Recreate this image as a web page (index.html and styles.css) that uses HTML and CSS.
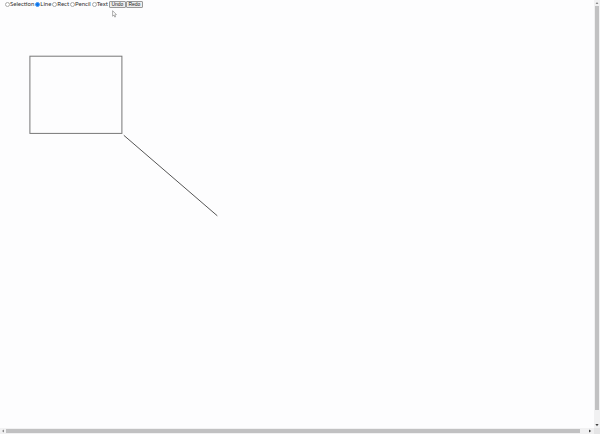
FILE: index.html
```
<!DOCTYPE html>
<html lang="en">
<head>
<meta charset="utf-8">
<title>Drawing board</title>
<link rel="stylesheet" href="styles.css">
</head>
<body>
<div class="window">
  <main class="page">
    <form class="toolbar">
      <label class="tool"><input type="radio" name="tool">Selection</label>
      <label class="tool"><input type="radio" name="tool" checked>Line</label>
      <label class="tool"><input type="radio" name="tool">Rect</label>
      <label class="tool"><input type="radio" name="tool">Pencil</label>
      <label class="tool"><input type="radio" name="tool">Text</label>
      <div class="history">
        <button type="button">Undo</button>
        <button type="button">Redo</button>
      </div>
    </form>
    <svg class="board" aria-label="Canvas">
      <rect x="29.9" y="48.2" width="92" height="77.2"/>
      <path d="M123.8 127.3L217.3 207.8"/>
    </svg>
    <svg class="cursor" viewBox="0 0 5 8" aria-hidden="true"><path d="M.6.7V6.2L1.9 5.1 2.8 7.1 3.6 6.7 2.8 4.8 4.4 4.6Z"/></svg>
  </main>
  <div class="scroll scroll-y">
    <svg class="arrow" viewBox="0 0 6 6"><path d="M3 2L4.4 4H1.6Z"/></svg>
    <div class="thumb"></div>
    <svg class="arrow" viewBox="0 0 6 6"><path d="M3 4.2L4.6 2H1.4Z"/></svg>
  </div>
  <div class="scroll scroll-x">
    <svg class="arrow" viewBox="0 0 6 6"><path d="M2 3L4 1.6V4.4Z"/></svg>
    <div class="thumb"></div>
    <svg class="arrow" viewBox="0 0 6 6"><path d="M4.2 3L2 1.4V4.6Z"/></svg>
  </div>
  <div class="corner"></div>
</div>
</body>
</html>
```
FILE: styles.css
```
* {
  box-sizing: border-box;
}

body {
  margin: 0;
  background: #fdfdfe;
  color: #333;
  font: 6px/8px Lato, "Open Sans", sans-serif;
}

.window {
  display: grid;
  grid-template: 1fr 6px / 1fr 6px;
  height: 100vh;
}

.page {
  position: relative;
  display: flex;
  flex-direction: column;
  min-width: 0;
}

.toolbar {
  display: flex;
  align-items: center;
  gap: 1px;
  height: 8px;
  padding-left: 5px;
}

.tool {
  display: flex;
  align-items: center;
}

.tool input {
  appearance: none;
  width: 5px;
  height: 5px;
  margin: 0;
  border: 1px solid #aaa;
  border-radius: 50%;
  background: #fff;
}

.tool input:checked {
  border-color: #4b98f3;
  background: #0875ed;
}

.history {
  display: flex;
}

.history button {
  width: 17px;
  height: 7px;
  padding: 0;
  border: 1px solid #999;
  border-radius: 1px;
  background: #eee;
  color: #222;
  font: 5px/5px "Liberation Sans", sans-serif;
}

.board {
  flex: 1;
  width: 100%;
  min-height: 0;
  fill: none;
  stroke: #555;
  stroke-width: 1;
}

.board rect {
  stroke: #777;
}

.cursor {
  position: absolute;
  left: 112px;
  top: 10px;
  width: 5px;
  height: 8px;
  fill: #fff;
  stroke: #777;
  stroke-width: 0.6;
}

.scroll {
  display: flex;
  background: #f1f1f2;
}

.scroll-y {
  flex-direction: column;
}

.scroll-x {
  padding-right: 1px;
}

.thumb {
  background: #c1c1c2;
}

.scroll-y .thumb {
  height: 94.5%;
  margin: 0 1px;
}

.scroll-x .thumb {
  width: 96.8%;
  margin: 1px 0;
}

.arrow {
  flex: none;
  width: 6px;
  height: 6px;
  fill: #888;
}

.arrow:last-child {
  margin: auto 0 0 auto;
  fill: #444;
}

.corner {
  background: #e5e5e6;
}
```
